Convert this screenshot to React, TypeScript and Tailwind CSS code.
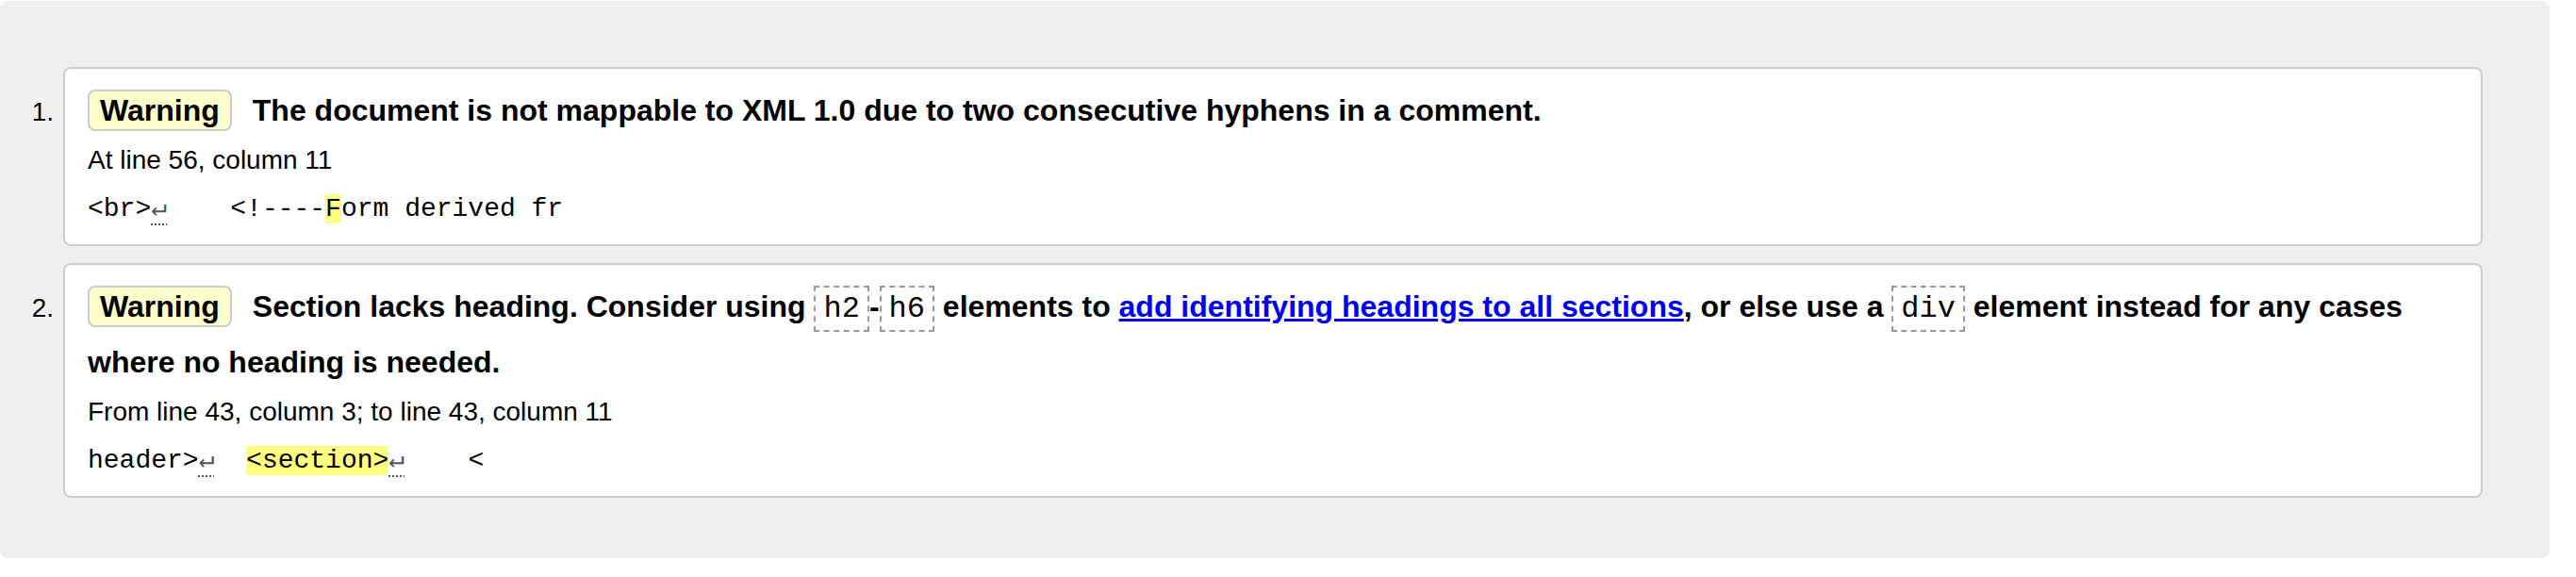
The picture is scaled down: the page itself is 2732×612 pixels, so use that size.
const sans = "font-['Liberation_Sans',Arial,sans-serif]";

function Lf() {
  return (
    <span className="text-[#555] underline decoration-dotted decoration-[1.5px] underline-offset-[8px]">
      ↵
    </span>
  );
}

function Badge() {
  return (
    <span className="px-[11px] py-[2px] border-2 border-[#ccc] rounded-[8px] bg-[#ffffcc] mr-[22px]">
      Warning
    </span>
  );
}

function Code({ children }: { children: React.ReactNode }) {
  return (
    <code className="font-normal font-['Liberation_Mono',monospace] px-[8px] py-[4px] border-2 border-dashed border-[#999]">
      {children}
    </code>
  );
}

function Item({ n, children }: { n: number; children: React.ReactNode }) {
  return (
    <li className="flex items-baseline">
      <div className="w-[67px] shrink-0 pr-[10px] text-right text-[28px]">{n}.</div>
      <div className="flex-1 bg-white border-2 border-[#ccc] rounded-[8px] pt-[16px] pb-[13px] px-[24px]">
        {children}
      </div>
    </li>
  );
}

export default function App() {
  return (
    <div className={`${sans} text-black bg-white min-h-[612px] pt-[1px]`}>
      <div className="w-[2704px] h-[591px] bg-[#efefef] rounded-[8px] pt-[70px] pr-[71px]">
        <ol className="flex flex-col gap-[18px]">
          <Item n={1}>
            <p className="text-[32px] font-bold leading-[56px]">
              <Badge />
              The document is not mappable to XML 1.0 due to two consecutive hyphens in a comment.
            </p>
            <p className="mt-[1px] text-[28px] leading-[48px]">At line 56, column 11</p>
            <p className="mt-[4px] text-[28px] leading-[48px] font-['Liberation_Mono',monospace] whitespace-pre">
              {"<br>"}
              <Lf />
              {"    <!----"}
              <span className="bg-[#ffff80]">F</span>
              {"orm derived fr"}
            </p>
          </Item>
          <Item n={2}>
            <p className="text-[32px] font-bold leading-[56px]">
              <Badge />
              Section lacks heading. Consider using <Code>h2</Code>-<Code>h6</Code> elements to{" "}
              <a href="#" className="text-[#0000ee] underline">
                add identifying headings to all sections
              </a>
              , or else use a <Code>div</Code> element instead for any cases where no heading is needed.
            </p>
            <p className="mt-[1px] text-[28px] leading-[48px]">From line 43, column 3; to line 43, column 11</p>
            <p className="mt-[4px] text-[28px] leading-[48px] font-['Liberation_Mono',monospace] whitespace-pre">
              {"header>"}
              <Lf />
              {"  "}
              <span className="bg-[#ffff80]">{"<section>"}</span>
              <Lf />
              {"    <"}
            </p>
          </Item>
        </ol>
      </div>
    </div>
  );
}
